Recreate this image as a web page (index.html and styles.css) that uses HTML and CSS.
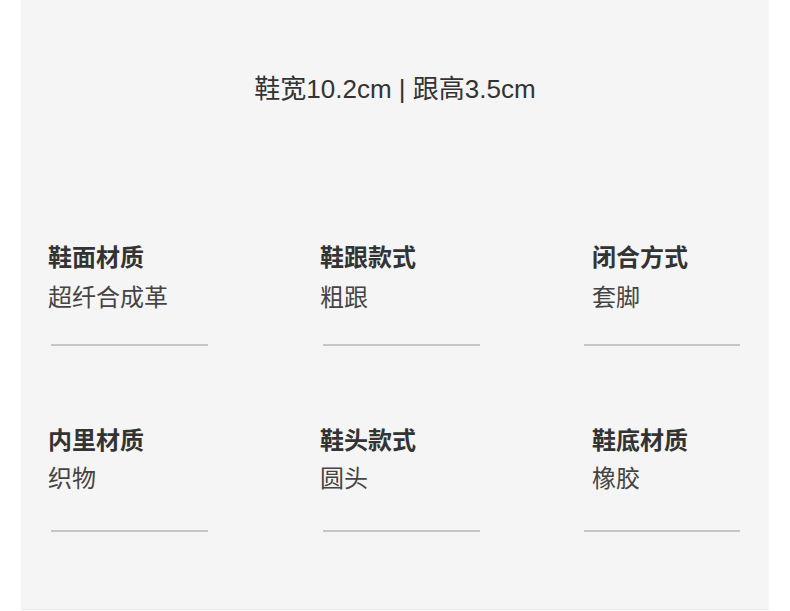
FILE: index.html
```html
<!DOCTYPE html>
<html lang="zh">
<head>
<meta charset="utf-8">
<title>鞋子参数</title>
<link rel="stylesheet" href="styles.css">
</head>
<body>
<main class="panel">
  <h1 class="size">鞋宽10.2cm | 跟高3.5cm</h1>
  <section class="specs">
    <div class="spec">
      <div class="spec-label">鞋面材质</div>
      <div class="spec-value">超纤合成革</div>
      <div class="spec-rule"></div>
    </div>
    <div class="spec">
      <div class="spec-label">鞋跟款式</div>
      <div class="spec-value">粗跟</div>
      <div class="spec-rule"></div>
    </div>
    <div class="spec spec--last">
      <div class="spec-label">闭合方式</div>
      <div class="spec-value">套脚</div>
      <div class="spec-rule"></div>
    </div>
    <div class="spec spec--low">
      <div class="spec-label">内里材质</div>
      <div class="spec-value">织物</div>
      <div class="spec-rule"></div>
    </div>
    <div class="spec spec--low">
      <div class="spec-label">鞋头款式</div>
      <div class="spec-value">圆头</div>
      <div class="spec-rule"></div>
    </div>
    <div class="spec spec--last spec--low">
      <div class="spec-label">鞋底材质</div>
      <div class="spec-value">橡胶</div>
      <div class="spec-rule"></div>
    </div>
  </section>
</main>
</body>
</html>
```

FILE: styles.css
```css
html, body {
  margin: 0;
  padding: 0;
  background: #ffffff;
}

body {
  font-family: "Liberation Sans", "Noto Sans CJK SC", sans-serif;
  color: #333333;
}

.panel {
  box-sizing: border-box;
  width: 748px;
  height: 610px;
  margin-left: 21px;
  padding: 76px 0 0 27px;
  background: #f5f5f5;
  border-bottom: 1px solid #e9e9e9;
}

.size {
  margin: 0 0 0 -27px;
  font-size: 26px;
  line-height: 26px;
  font-weight: normal;
  text-align: center;
  color: #333333;
}

.specs {
  display: grid;
  grid-template-columns: 272px 272px 1fr;
  row-gap: 83px;
  margin-top: 144px;
}

.spec {
  display: flex;
  flex-direction: column;
}

.spec-label {
  font-size: 24px;
  line-height: 24px;
  font-weight: bold;
  color: #333333;
}

.spec-value {
  margin-top: 16px;
  font-size: 24px;
  line-height: 24px;
  color: #444444;
}

.spec-rule {
  width: 157px;
  height: 2px;
  margin: 34px 0 0 3px;
  background: #c6c6c6;
}

.spec--low .spec-value {
  margin-top: 14px;
}

.spec--low .spec-rule {
  margin-top: 39px;
}

.spec--last .spec-rule {
  width: 156px;
  margin-left: -8px;
}
```
